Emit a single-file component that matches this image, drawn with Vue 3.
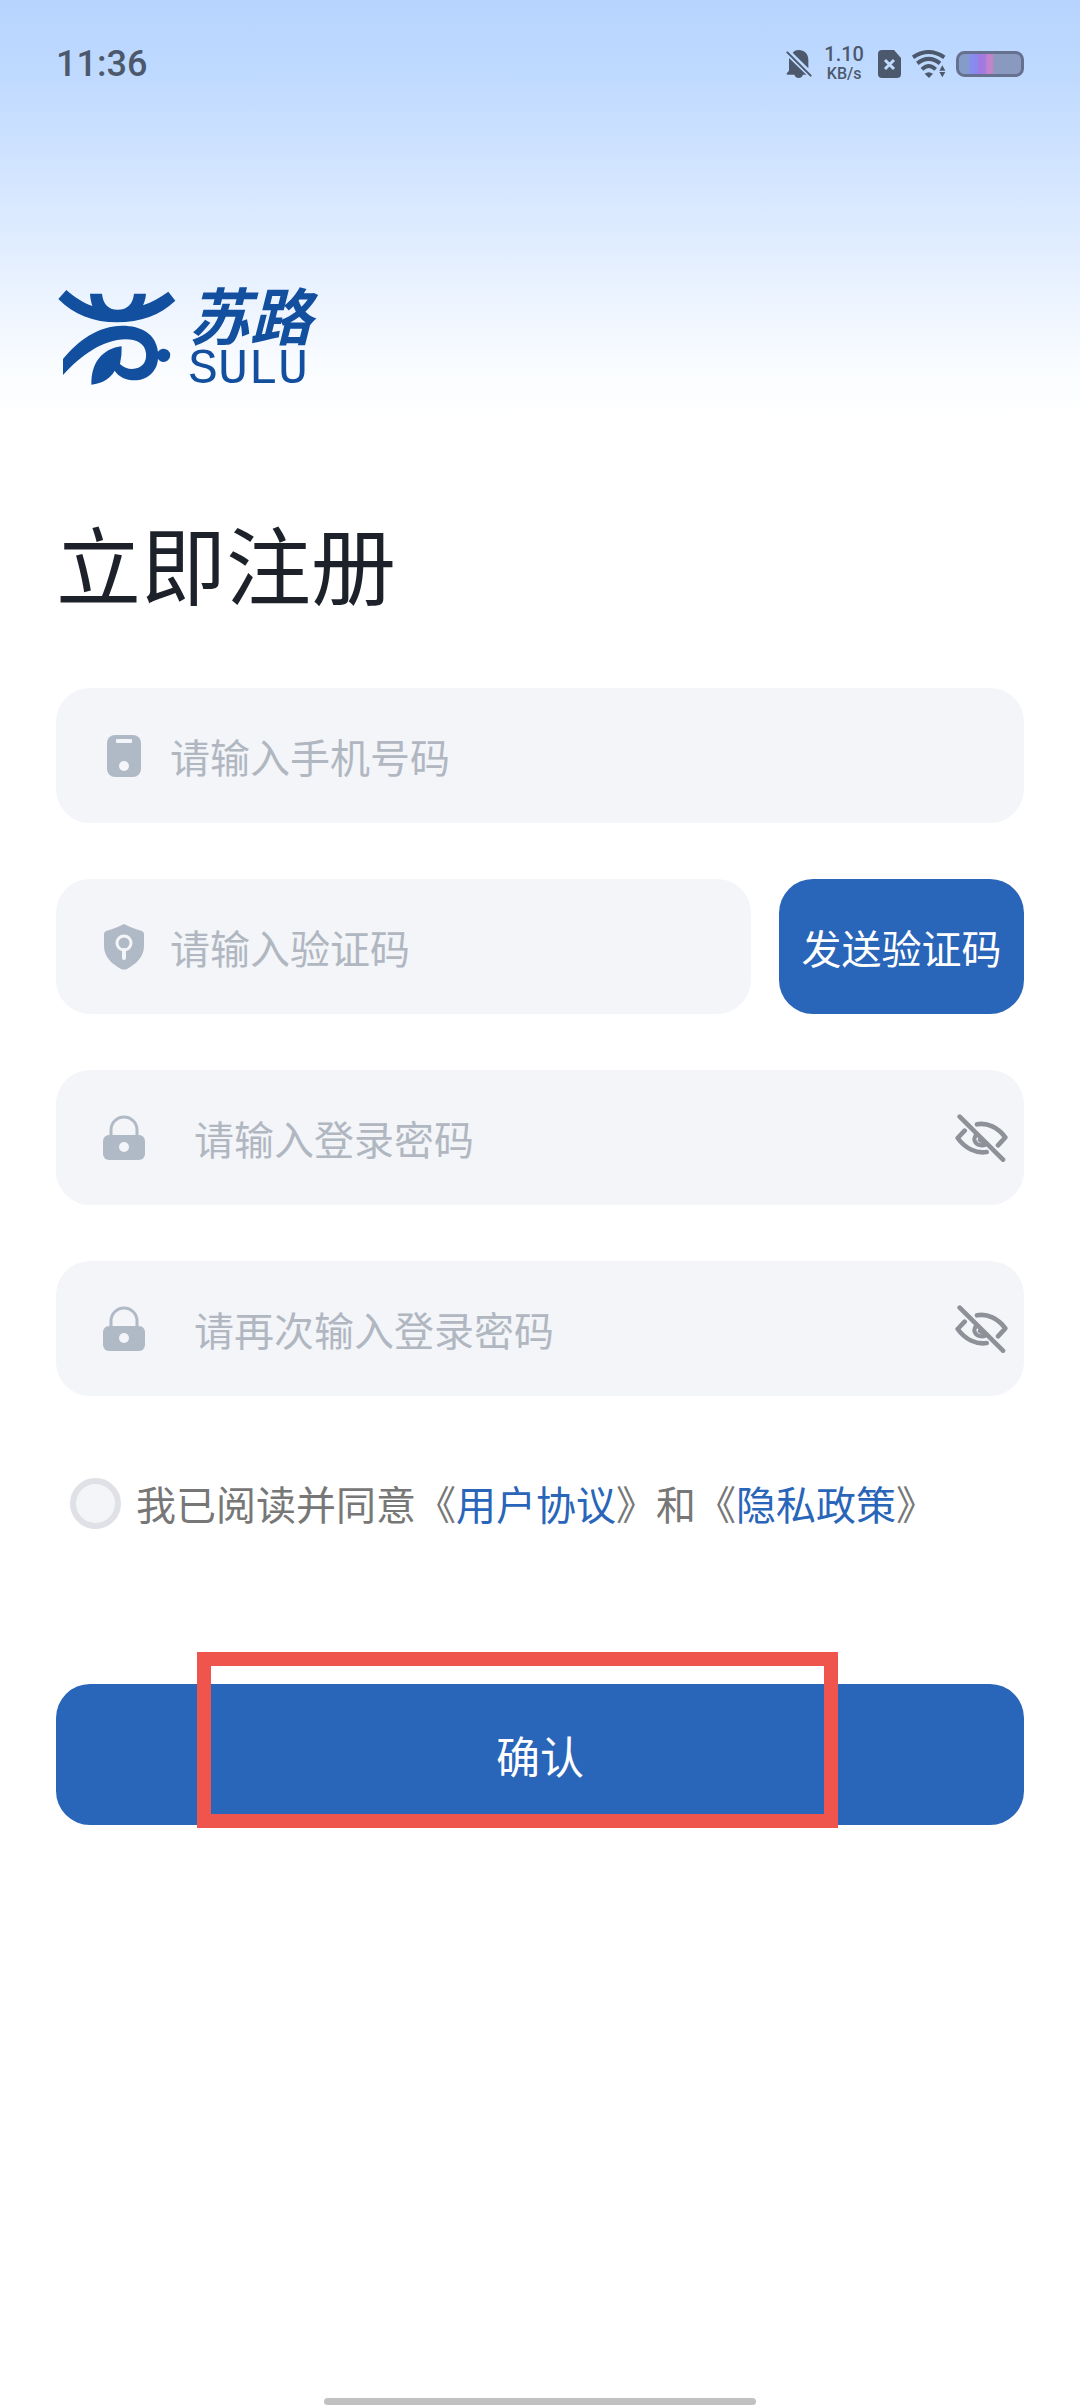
<script setup>
import { ref } from 'vue'

const phone = ref('')
const code = ref('')
const agreed = ref(false)
const passwords = ref([
  { id: 'password', label: '请输入登录密码', value: '', visible: false },
  { id: 'password-again', label: '请再次输入登录密码', value: '', visible: false }
])
</script>

<template>
  <div class="page">
    <header class="status">
      <time class="clock">11:36</time>
      <div class="indicators">
        <svg class="bell" width="26" height="28" viewBox="0 0 78 84" aria-hidden="true">
          <path fill="#4c596d" d="M20 8C25 2 31 0 38 0c17 0 29 12 29 29v26zM9 24 61 74H51c-2 6-7 10-13 10s-11-4-13-10H5c-3 0-4-3-2-5l6-7z" />
          <path d="M4 7 74 77" stroke="#4c596d" stroke-width="6" stroke-linecap="round" />
        </svg>
        <div class="speed">
          <span class="rate">1.10</span>
          <span class="unit">KB/s</span>
        </div>
        <svg class="sim" width="23" height="28" viewBox="0 0 23 28" aria-hidden="true">
          <path fill="#4c596d" d="M4 0h12l7 8v16a4 4 0 0 1-4 4H4a4 4 0 0 1-4-4V4a4 4 0 0 1 4-4z" />
          <path d="m7 10 9 9m0-9-9 9" stroke="#c1daff" stroke-width="3" />
        </svg>
        <svg class="wifi" width="34" height="28" viewBox="0 0 102 84" aria-hidden="true">
          <g fill="none" stroke="#4c596d" stroke-width="12">
            <path d="M3 22Q50-10 97 22" />
            <path d="M16 40Q50 13 84 40" />
            <path d="M30 58Q50 38 71 58" />
          </g>
          <path fill="#4c596d" d="M38 71q12-9 25 0L51 84zM82 62l9-16 9 16zM82 66h18l-9 16z" />
        </svg>
        <svg class="battery" width="68" height="26" viewBox="0 0 68 26" aria-hidden="true">
          <defs>
            <linearGradient id="charge">
              <stop offset="0" stop-color="#869cc8" />
              <stop offset="0.16" stop-color="#869cc8" />
              <stop offset="0.2" stop-color="#858df0" />
              <stop offset="0.3" stop-color="#8d86ee" />
              <stop offset="0.34" stop-color="#a078e0" />
              <stop offset="0.43" stop-color="#a67be0" />
              <stop offset="0.46" stop-color="#c183cc" />
              <stop offset="0.54" stop-color="#c183cc" />
              <stop offset="0.56" stop-color="#8a99c0" />
              <stop offset="1" stop-color="#8a99c0" />
            </linearGradient>
          </defs>
          <rect x="1.500" y="1.500" width="65" height="23" rx="7" fill="url(#charge)" stroke="#66708f" stroke-width="3" />
        </svg>
      </div>
    </header>

    <main class="content">
      <div class="brand">
        <svg class="emblem" width="118" height="98" viewBox="53 55 354 294" aria-hidden="true">
          <g fill="#124f9f">
            <path d="M54 88 78 61C104 84 128 99 156 109C152 97 150 85 149 72H185C188 102 203 120 232 120C262 120 278 102 281 72H317C316 85 313 96 308 107C335 98 361 83 384 66L405 93C360 136 300 158 230 158C160 158 100 135 54 88Z" />
            <path d="M68 268C112 213 174 168 246 168C302 168 347 192 353 246A20 20 0 1 1 353 268C350 306 320 332 283 332C257 332 236 322 223 303C211 325 188 341 153 345C153 311 160 286 176 266C192 246 216 233 244 230Q245 258 239 283C250 294 262 298 275 298C304 298 320 278 317 251C314 221 288 209 256 209C188 209 120 259 68 316Z" />
          </g>
        </svg>
        <div class="wordmark">
          <span class="name">苏路</span>
          <span class="latin">SULU</span>
        </div>
      </div>

      <h1 class="title">立即注册</h1>

      <form @submit.prevent>
        <div class="fields">
          <div class="field">
            <label class="icon" for="phone" aria-label="手机号码">
              <svg width="44" height="46" viewBox="0 0 44 46" aria-hidden="true">
                <rect x="5" y="2" width="34" height="42" rx="8" fill="#b0bac6" />
                <rect x="14" y="6" width="16" height="4" rx="1" fill="#f3f5f9" />
                <circle cx="22" cy="33" r="5" fill="#f3f5f9" />
              </svg>
            </label>
            <input id="phone" v-model="phone" type="tel" placeholder="请输入手机号码">
          </div>

          <div class="row">
            <div class="field">
              <label class="icon" for="code" aria-label="验证码">
                <svg width="44" height="46" viewBox="0 0 44 46" aria-hidden="true">
                  <path fill="#b0bac6" d="M22 0q10 5 18 7 2 1 2 3v12c0 11-8 18-17 23q-3 1-6 0C10 40 2 33 2 22V10q0-2 2-3 8-2 18-7z" />
                  <circle cx="22" cy="19" r="7" fill="none" stroke="#f3f5f9" stroke-width="3" />
                  <path d="M22 26v8" stroke="#f3f5f9" stroke-width="4" stroke-linecap="round" />
                </svg>
              </label>
              <input id="code" v-model="code" type="text" inputmode="numeric" placeholder="请输入验证码">
            </div>
            <button class="send" type="button">发送验证码</button>
          </div>

          <div v-for="item in passwords" :key="item.id" class="field secret">
            <label class="icon" :for="item.id" :aria-label="item.label">
              <svg width="44" height="46" viewBox="0 0 44 46" aria-hidden="true">
                <path d="M9 22V15a13 13 0 0 1 26 0v7" fill="none" stroke="#b0bac6" stroke-width="3" />
                <rect x="1" y="20" width="42" height="25" rx="6" fill="#b0bac6" />
                <circle cx="22" cy="32" r="5" fill="#f3f5f9" />
              </svg>
            </label>
            <input :id="item.id" v-model="item.value" :type="item.visible ? 'text' : 'password'" :placeholder="item.label">
            <button class="eye" type="button" aria-label="显示密码" @click="item.visible = !item.visible">
              <svg width="53" height="48" viewBox="645 760 159 144" fill="none" stroke="#8e9298" stroke-width="14" stroke-linecap="round" stroke-linejoin="round" aria-hidden="true">
                <path d="M659 768 789 897M711 791C742 785 774 801 796 830L774 854M674 810 653 832C675 863 708 879 740 874" />
                <path d="M707 824C698 838 706 851 722 854C730 855 737 852 739 848M719 838 727 843" stroke-width="12" />
              </svg>
            </button>
          </div>
        </div>

        <div class="agreement">
          <input id="agree" v-model="agreed" type="checkbox">
          <label for="agree">我已阅读并同意《<a href="#terms">用户协议</a>》和《<a href="#privacy">隐私政策</a>》</label>
        </div>

        <div class="confirm-area">
          <button class="confirm" type="submit">确认</button>
          <div class="highlight"></div>
        </div>
      </form>
    </main>

    <div class="home-bar"></div>
  </div>
</template>

<style>
body {
  margin: 0;
  background: #fff;
}
</style>

<style scoped>
.page {
  box-sizing: border-box;
  display: flex;
  flex-direction: column;
  min-height: 100vh;
  padding-bottom: 3px;
  background: linear-gradient(#b6d4ff 0, #c0daff 80px, #dfecff 236px, #f8fbff 360px, #fff 420px);
  font-family: Roboto, "Noto Sans CJK SC", sans-serif;
}

.status {
  display: flex;
  align-items: center;
  justify-content: space-between;
  height: 48px;
  padding: 40px 56px 0;
  color: #4c596d;
}

.clock {
  font-size: 36px;
  font-weight: 500;
  line-height: 48px;
}

.indicators {
  display: flex;
  align-items: center;
}

.speed {
  display: flex;
  flex-direction: column;
  align-items: center;
  margin: 0 14px 0 12px;
  font-weight: 500;
}

.rate {
  font-size: 20px;
  line-height: 20px;
}

.unit {
  font-size: 16px;
  line-height: 20px;
}

.sim {
  margin-right: 11px;
}

.wifi {
  margin-right: 10px;
}

.content {
  flex: 1;
  padding: 0 56px;
}

.brand {
  display: flex;
  gap: 12px;
  height: 98px;
  margin-top: 200px;
  padding-left: 2px;
  color: #124f9f;
}

.wordmark {
  display: flex;
  flex-direction: column;
}

.name {
  font-family: "Liberation Sans", "Noto Sans CJK SC", sans-serif;
  font-size: 62px;
  font-style: italic;
  font-weight: 700;
  line-height: 62px;
}

.latin {
  font-family: "Liberation Mono", monospace;
  font-size: 50px;
  line-height: 40px;
}

.title {
  margin: 126px 0 76px;
  color: #1d2129;
  font-family: "Noto Sans CJK SC", sans-serif;
  font-size: 85px;
  font-weight: 400;
  line-height: 100px;
}

.fields {
  display: flex;
  flex-direction: column;
  gap: 56px;
}

.row {
  display: flex;
  gap: 28px;
}

.row .field {
  flex: 1;
  min-width: 0;
}

.field {
  box-sizing: border-box;
  display: flex;
  align-items: center;
  gap: 24px;
  height: 135px;
  padding: 0 16px 0 46px;
  border-radius: 34px;
  background: #f3f5f9;
}

.secret {
  gap: 48px;
}

.icon,
.icon svg,
.eye svg {
  display: block;
  flex: none;
}

.field input {
  flex: 1;
  min-width: 0;
  height: 60px;
  padding: 0;
  border: 0;
  outline: 0;
  background: transparent;
  color: #1d2129;
  font-family: "Noto Sans CJK SC", sans-serif;
  font-size: 40px;
}

.field input::placeholder {
  color: #b1b7c1;
  opacity: 1;
}

.eye {
  padding: 0;
  border: 0;
  background: none;
}

.send,
.confirm {
  border: 0;
  border-radius: 34px;
  background: #2965b8;
  color: #fff;
  font-family: "Noto Sans CJK SC", sans-serif;
}

.send {
  width: 245px;
  padding: 0;
  font-size: 40px;
}

.agreement {
  display: flex;
  align-items: center;
  gap: 15px;
  margin-top: 82px;
  padding-left: 14px;
  height: 50px;
  color: #777;
  font-family: "Noto Sans CJK SC", sans-serif;
  font-size: 40px;
  line-height: 50px;
}

.agreement input {
  flex: none;
  box-sizing: border-box;
  width: 51px;
  height: 51px;
  margin: 0;
  border: 6px solid #dfe1e6;
  border-radius: 50%;
  background: #f3f5f9;
  appearance: none;
}

.agreement input:checked {
  background: #2965b8;
}

.agreement a {
  color: #2965b8;
  text-decoration: none;
}

.confirm-area {
  position: relative;
  margin-top: 156px;
}

.confirm {
  display: block;
  width: 100%;
  height: 141px;
  font-size: 44px;
}

.highlight {
  position: absolute;
  top: -32px;
  right: 186px;
  bottom: -3px;
  left: 141px;
  border: 14px solid #ef544d;
  pointer-events: none;
}

.home-bar {
  width: 40%;
  height: 7px;
  margin: 0 auto;
  border-radius: 4px;
  background: #c1c1c1;
}
</style>
